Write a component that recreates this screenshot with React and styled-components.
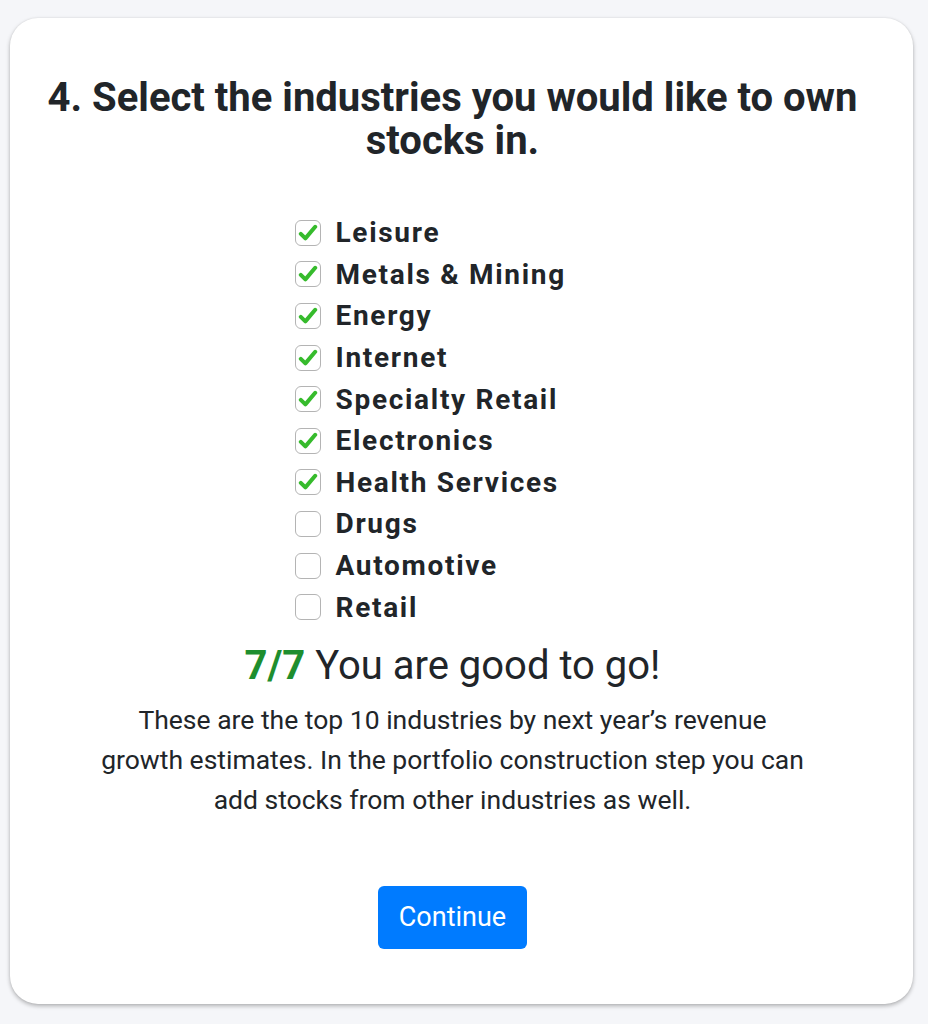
import React, { useState } from 'react';
import styled, { createGlobalStyle } from 'styled-components';

const GlobalStyle = createGlobalStyle`
    html, body {
        margin: 0;
        padding: 0;
        background: #f5f6f9;
        font-family: Roboto, "Liberation Sans", Arial, sans-serif;
        color: #212529;
    }
`;

const Page = styled.div`
    padding: 18px 15px 20px 10px;
`;

const Card = styled.div`
    width: 903px;
    box-sizing: border-box;
    background: #ffffff;
    border-radius: 28px;
    box-shadow: 0 2px 4px rgba(0, 0, 0, 0.28), 0 0 2px rgba(0, 0, 0, 0.08);
    padding: 58px 58px 55px 40px;
    display: flex;
    flex-direction: column;
    align-items: center;
`;

const Title = styled.h1`
    margin: 0;
    font-size: 40px;
    line-height: 43px;
    font-weight: 700;
    text-align: center;
    white-space: nowrap;
`;

const List = styled.div`
    width: 316px;
    margin-top: 50px;
    display: flex;
    flex-direction: column;
`;

const Item = styled.label`
    display: flex;
    align-items: center;
    gap: 15px;
    height: 41.6px;
    cursor: pointer;
    font-size: 28px;
    font-weight: 700;
    letter-spacing: 1.7px;
    white-space: nowrap;
`;

const Box = styled.span`
    width: 26px;
    height: 26px;
    flex: none;
    box-sizing: border-box;
    border: 1.5px solid #b4b4b4;
    border-radius: 6px;
    background: #fff;
    display: flex;
    align-items: center;
    justify-content: center;
`;

const Status = styled.div`
    margin-top: 17px;
    font-size: 40px;
    line-height: 42px;
    text-align: center;
`;

const Count = styled.span`
    color: #1e8e2e;
    font-weight: 700;
`;

const Note = styled.p`
    margin: 13px 0 0;
    font-size: 26.5px;
    line-height: 40px;
    text-align: center;
    white-space: nowrap;
`;

const Button = styled.button`
    margin-top: 66px;
    width: 149px;
    height: 63px;
    border: none;
    border-radius: 6px;
    background: #007bff;
    color: #fff;
    font-family: inherit;
    font-size: 27px;
    cursor: pointer;
`;

const Check = () => (
    <svg width="20" height="20" viewBox="0 0 20 20">
        <path
            d="M2.8 10.8 L7.4 15.4 L17.2 3.8"
            fill="none"
            stroke="#36bb2c"
            strokeWidth="4"
            strokeLinecap="round"
            strokeLinejoin="round"
        />
    </svg>
);

const industries = [
    'Leisure',
    'Metals & Mining',
    'Energy',
    'Internet',
    'Specialty Retail',
    'Electronics',
    'Health Services',
    'Drugs',
    'Automotive',
    'Retail',
];

const App = () => {
    const [selected, setSelected] = useState(industries.slice(0, 7));

    const toggle = (name) =>
        setSelected((prev) =>
            prev.includes(name) ? prev.filter((n) => n !== name) : [...prev, name]
        );

    return (
        <Page>
            <GlobalStyle />
            <Card>
                <Title>
                    4. Select the industries you would like to own
                    <br />
                    stocks in.
                </Title>
                <List>
                    {industries.map((name) => (
                        <Item key={name} onClick={() => toggle(name)}>
                            <Box>{selected.includes(name) && <Check />}</Box>
                            {name}
                        </Item>
                    ))}
                </List>
                <Status>
                    <Count>{selected.length}/7</Count> You are good to go!
                </Status>
                <Note>
                    These are the top 10 industries by next year’s revenue
                    <br />
                    growth estimates. In the portfolio construction step you can
                    <br />
                    add stocks from other industries as well.
                </Note>
                <Button>Continue</Button>
            </Card>
        </Page>
    );
};

export default App;
